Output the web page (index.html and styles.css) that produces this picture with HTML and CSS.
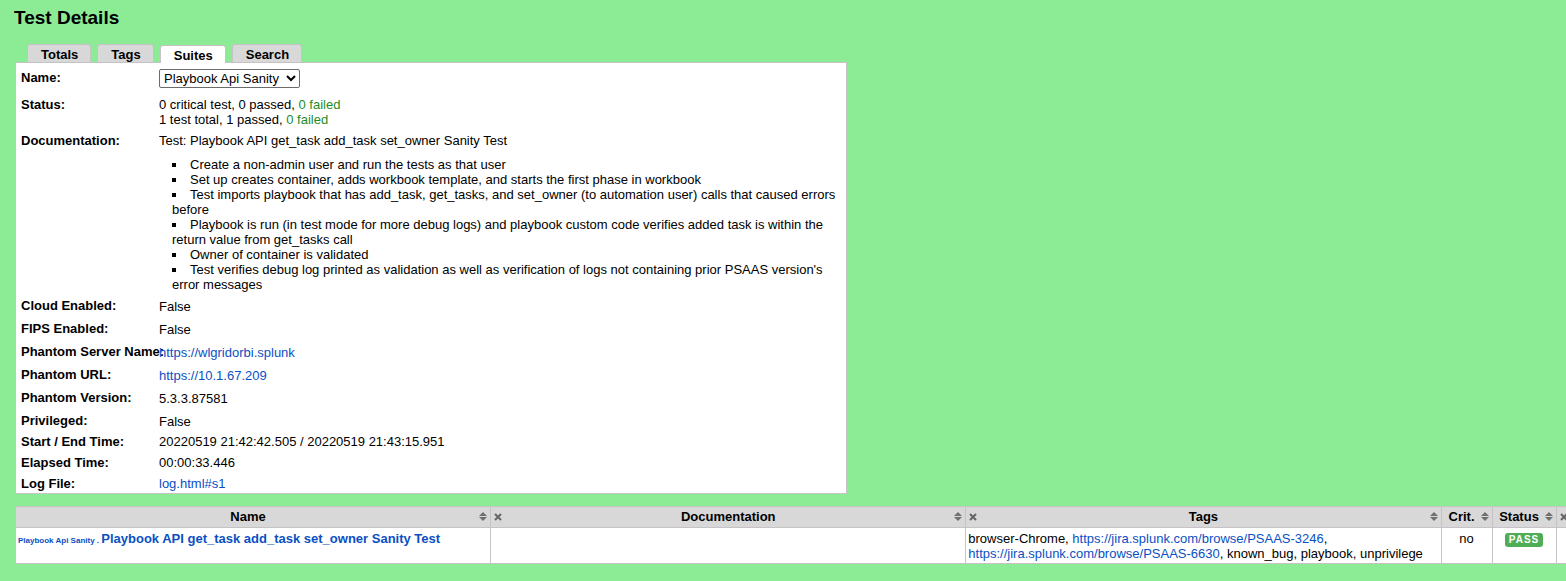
FILE: index.html
```
<!DOCTYPE html>
<html lang="en">
<head>
<meta charset="utf-8">
<title>Test Details</title>
<link rel="stylesheet" href="styles.css">
</head>
<body>
<main class="report">
  <h2 class="title">Test Details</h2>
  <nav class="tabs">
    <a class="tab" href="#totals">Totals</a>
    <a class="tab" href="#tags">Tags</a>
    <a class="tab active" href="#suites">Suites</a>
    <a class="tab" href="#search">Search</a>
  </nav>
  <section class="panel">
    <table class="details">
      <tr class="row-name"><th><label for="suite">Name:</label></th><td><select id="suite" class="suite-select"><option>Playbook Api Sanity</option></select></td></tr>
      <tr class="row-status"><th>Status:</th><td>0 critical test, 0 passed, <span class="ok">0 failed</span><br>1 test total, 1 passed, <span class="ok">0 failed</span></td></tr>
      <tr class="row-doc"><th>Documentation:</th><td>Test: Playbook API get_task add_task set_owner Sanity Test
        <ul class="doc-list">
          <li>Create a non-admin user and run the tests as that user</li>
          <li>Set up creates container, adds workbook template, and starts the first phase in workbook</li>
          <li>Test imports playbook that has add_task, get_tasks, and set_owner (to automation user) calls that caused errors before</li>
          <li>Playbook is run (in test mode for more debug logs) and playbook custom code verifies added task is within the return value from get_tasks call</li>
          <li>Owner of container is validated</li>
          <li>Test verifies debug log printed as validation as well as verification of logs not containing prior PSAAS version's error messages</li>
        </ul></td></tr>
      <tr class="row-meta"><th>Cloud Enabled:</th><td>False</td></tr>
      <tr class="row-meta"><th>FIPS Enabled:</th><td>False</td></tr>
      <tr class="row-meta"><th>Phantom Server Name:</th><td><a href="#server">https://wlgridorbi.splunk</a></td></tr>
      <tr class="row-meta"><th>Phantom URL:</th><td><a href="#url">https://10.1.67.209</a></td></tr>
      <tr class="row-meta"><th>Phantom Version:</th><td>5.3.3.87581</td></tr>
      <tr class="row-meta"><th>Privileged:</th><td>False</td></tr>
      <tr class="row-time"><th>Start / End Time:</th><td>20220519 21:42:42.505 / 20220519 21:43:15.951</td></tr>
      <tr class="row-time"><th>Elapsed Time:</th><td>00:00:33.446</td></tr>
      <tr class="row-time"><th>Log File:</th><td><a href="#s1">log.html#s1</a></td></tr>
    </table>
  </section>
  <svg class="defs" aria-hidden="true">
    <symbol id="sort" viewBox="0 0 8 9"><path d="M4 0L8 4H0ZM0 5H8L4 9Z"/></symbol>
    <symbol id="close" viewBox="0 0 8 8"><path d="M1 1L7 7M7 1L1 7"/></symbol>
  </svg>
  <table class="tests">
    <colgroup><col><col><col><col class="col-crit"><col class="col-status"><col class="col-message"></colgroup>
    <thead>
      <tr>
        <th><div class="head"><span>Name</span><button class="icon" aria-label="Sort by name"><svg class="sort"><use href="#sort"/></svg></button></div></th>
        <th><div class="head"><button class="icon" aria-label="Hide documentation"><svg class="close"><use href="#close"/></svg></button><span>Documentation</span><button class="icon" aria-label="Sort by documentation"><svg class="sort"><use href="#sort"/></svg></button></div></th>
        <th><div class="head"><button class="icon" aria-label="Hide tags"><svg class="close"><use href="#close"/></svg></button><span>Tags</span><button class="icon" aria-label="Sort by tags"><svg class="sort"><use href="#sort"/></svg></button></div></th>
        <th><div class="head"><span>Crit.</span><button class="icon" aria-label="Sort by criticality"><svg class="sort"><use href="#sort"/></svg></button></div></th>
        <th><div class="head"><span>Status</span><button class="icon" aria-label="Sort by status"><svg class="sort"><use href="#sort"/></svg></button></div></th>
        <th><div class="head"><button class="icon" aria-label="Hide message"><svg class="close"><use href="#close"/></svg></button></div></th>
      </tr>
    </thead>
    <tbody>
      <tr>
        <td><a class="test-name" href="#s1-t1"><span class="parent">Playbook Api Sanity . </span>Playbook API get_task add_task set_owner Sanity Test</a></td>
        <td></td>
        <td>browser-Chrome, <a href="#3246">https://jira.splunk.com/browse/PSAAS-3246</a>, <a href="#6630">https://jira.splunk.com/browse/PSAAS-6630</a>, known_bug, playbook, unprivilege</td>
        <td class="center">no</td>
        <td class="center"><span class="badge">PASS</span></td>
        <td></td>
      </tr>
    </tbody>
  </table>
</main>
</body>
</html>
```
FILE: styles.css
```
* { box-sizing: border-box; }

body {
  margin: 0;
  background: #8ceb95;
  color: #000;
  font: 13px/15px "Liberation Sans", Helvetica, Arial, sans-serif;
  overflow-x: hidden;
}

a { color: #0a50c3; text-decoration: none; }

.report { padding: 7px 0 18px 15px; }

.title { margin: 0 0 15px -1px; font-size: 19px; line-height: 22px; }

.tabs { display: flex; align-items: flex-end; gap: 6px; padding-left: 12px; }

.tab {
  padding: 2px 12px 0 13px;
  border: 1px solid #c6c2c6;
  border-bottom: 0;
  border-radius: 3px 3px 0 0;
  background: #d8d8d8;
  color: #000;
  font-weight: bold;
}

.tab.active { background: #fff; margin-bottom: -1px; z-index: 1; }

.panel { width: 832px; max-width: 100%; border: 1px solid #c6c2c6; background: #fff; }

.details { width: 100%; border-collapse: collapse; table-layout: fixed; }
.details th { width: 143px; padding: 3px 0 3px 5px; text-align: left; vertical-align: top; white-space: nowrap; }
.details td { padding: 3px 10px 3px 0; vertical-align: top; }
.details .row-name th { padding-top: 7px; }
.details .row-name td { padding-top: 6px; padding-bottom: 6px; }
.details .row-doc td { padding-bottom: 0; }
.details .row-meta th { padding-top: 6px; padding-bottom: 2px; }
.details .row-meta td { padding-top: 7px; padding-bottom: 1px; }
.details .row-time th, .details .row-time td { padding-top: 4px; padding-bottom: 2px; }

.suite-select {
  display: block;
  height: 19px;
  padding: 0 3px 0 0;
  border: 1px solid #6b6b6b;
  border-radius: 2px;
  background: #fff;
  color: #000;
  font: 13px "Liberation Sans", Helvetica, Arial, sans-serif;
}

.ok { color: #1e8c28; }

.doc-list { margin: 9px 0 0; padding: 0 0 0 13px; list-style: square inside; }

.defs { display: none; }

.tests { width: 100%; margin-top: 12px; border-collapse: collapse; table-layout: fixed; background: #fff; }
.tests th, .tests td { border: 1px solid #c6c2c6; }
.tests th:last-child, .tests td:last-child { border-right: 0; }
.tests th { padding: 1px 2px 2px; background: #d8d8d8; }
.tests td { padding: 3px 2px 2px; vertical-align: top; }
.tests .center { text-align: center; }
.col-crit { width: 51px; }
.col-status { width: 64px; }
.col-message { width: 10px; }

.head { display: flex; align-items: center; height: 17px; }
.head span { flex: 1; text-align: center; }

.icon { flex: none; display: flex; padding: 0 1px; border: 0; background: none; }
.sort { width: 8px; height: 9px; fill: #707070; }
.close { width: 8px; height: 8px; fill: none; stroke: #666; stroke-width: 2; }

.test-name { font-weight: bold; }
.parent { font-size: 8px; }

.badge {
  display: inline-block;
  padding: 0 4px;
  border-radius: 3px;
  background: #4fad56;
  color: #fff;
  font-size: 10px;
  font-weight: bold;
  line-height: 14px;
  letter-spacing: 1px;
}
```
